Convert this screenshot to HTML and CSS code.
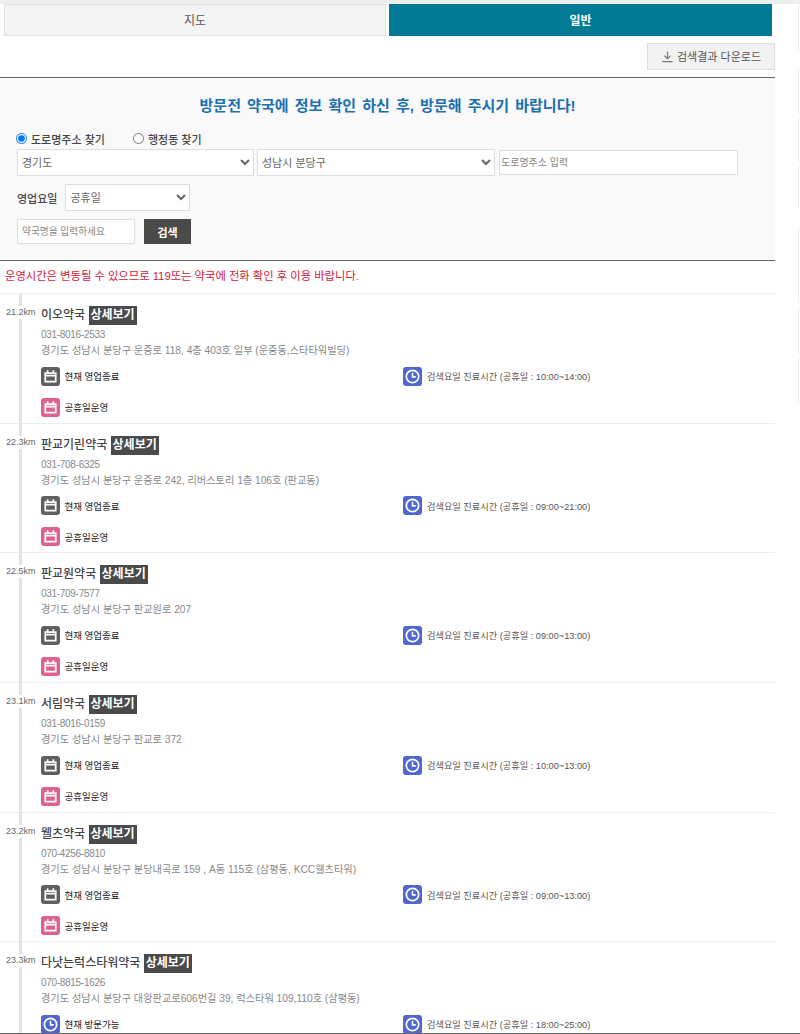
FILE: index.html
```html
<!DOCTYPE html>
<html lang="ko">
<head>
    <meta charset="UTF-8">
    <meta name="viewport" content="width=device-width, initial-scale=1.0">
    <title>약국 찾기</title>
    <link rel="stylesheet" href="styles.css">
</head>
<body>
    <svg class="icon-defs" width="0" height="0">
        <symbol id="ico-cal" viewBox="0 0 20 20">
            <path d="M4.500 6.500h11v9h-11zM4.500 9h11M7 3.500v3M13 3.500v3" fill="none" stroke="#fff" stroke-width="1.800"/>
        </symbol>
        <symbol id="ico-clock" viewBox="0 0 20 20">
            <circle cx="10" cy="10" r="6.500" fill="none" stroke="#fff" stroke-width="1.800"/>
            <path d="M10 6v4.400h3.400" fill="none" stroke="#fff" stroke-width="1.600"/>
        </symbol>
    </svg>

    <div class="page">
        <div class="main">
            <!-- Tabs -->
            <div class="tabs">
                <div class="tab">지도</div>
                <div class="tab tab-on">일반</div>
            </div>
            <div class="down-row">
                <button class="down-btn">
                    <svg class="down-ico" viewBox="0 0 14 14"><path d="M7 1.500v7.500M3.600 6l3.400 3.400L10.400 6M1.500 12.500h11" fill="none" stroke="#777" stroke-width="1.200"/></svg>
                    검색결과 다운로드
                </button>
            </div>

            <!-- Search box -->
            <div class="search">
                <h2 class="notice">방문전 약국에 정보 확인 하신 후, 방문해 주시기 바랍니다!</h2>
                <div class="radios">
                    <label class="radio"><input type="radio" name="addr" checked>도로명주소 찾기</label>
                    <label class="radio"><input type="radio" name="addr">행정동 찾기</label>
                </div>
                <div class="addr-row">
                    <select class="sel sel-city"><option>경기도</option></select>
                    <select class="sel sel-gu"><option>성남시 분당구</option></select>
                    <input class="txt txt-road" placeholder="도로명주소 입력">
                </div>
                <div class="day-row">
                    <span class="day-label">영업요일</span>
                    <select class="sel sel-day"><option>공휴일</option></select>
                </div>
                <div class="name-row">
                    <input class="txt txt-name" placeholder="약국명을 입력하세요">
                    <button class="search-btn">검색</button>
                </div>
            </div>

            <p class="warn">운영시간은 변동될 수 있으므로 119또는 약국에 전화 확인 후 이용 바랍니다.</p>

            <!-- Results -->
            <ul class="list">
                <li class="item">
                    <span class="dist">21.2km</span>
                    <div class="title">이오약국 <a class="more">상세보기</a></div>
                    <div class="info tel">031-8016-2533</div>
                    <div class="info">경기도 성남시 분당구 운중로 118, 4층 403호 일부 (운중동,스타타워빌딩)</div>
                    <div class="stats">
                        <div class="stat"><span class="badge gray"><svg><use href="#ico-cal"/></svg></span>현재 영업종료</div>
                        <div class="stat"><span class="badge blue"><svg><use href="#ico-clock"/></svg></span><span class="hours">검색요일 진료시간 (공휴일 : 10:00~14:00)</span></div>
                        <div class="stat"><span class="badge pink"><svg><use href="#ico-cal"/></svg></span>공휴일운영</div>
                    </div>
                </li>
                <li class="item">
                    <span class="dist">22.3km</span>
                    <div class="title">판교기린약국 <a class="more">상세보기</a></div>
                    <div class="info tel">031-708-6325</div>
                    <div class="info">경기도 성남시 분당구 운중로 242, 리버스토리 1층 106호 (판교동)</div>
                    <div class="stats">
                        <div class="stat"><span class="badge gray"><svg><use href="#ico-cal"/></svg></span>현재 영업종료</div>
                        <div class="stat"><span class="badge blue"><svg><use href="#ico-clock"/></svg></span><span class="hours">검색요일 진료시간 (공휴일 : 09:00~21:00)</span></div>
                        <div class="stat"><span class="badge pink"><svg><use href="#ico-cal"/></svg></span>공휴일운영</div>
                    </div>
                </li>
                <li class="item">
                    <span class="dist">22.5km</span>
                    <div class="title">판교원약국 <a class="more">상세보기</a></div>
                    <div class="info tel">031-709-7577</div>
                    <div class="info">경기도 성남시 분당구 판교원로 207</div>
                    <div class="stats">
                        <div class="stat"><span class="badge gray"><svg><use href="#ico-cal"/></svg></span>현재 영업종료</div>
                        <div class="stat"><span class="badge blue"><svg><use href="#ico-clock"/></svg></span><span class="hours">검색요일 진료시간 (공휴일 : 09:00~13:00)</span></div>
                        <div class="stat"><span class="badge pink"><svg><use href="#ico-cal"/></svg></span>공휴일운영</div>
                    </div>
                </li>
                <li class="item">
                    <span class="dist">23.1km</span>
                    <div class="title">서림약국 <a class="more">상세보기</a></div>
                    <div class="info tel">031-8016-0159</div>
                    <div class="info">경기도 성남시 분당구 판교로 372</div>
                    <div class="stats">
                        <div class="stat"><span class="badge gray"><svg><use href="#ico-cal"/></svg></span>현재 영업종료</div>
                        <div class="stat"><span class="badge blue"><svg><use href="#ico-clock"/></svg></span><span class="hours">검색요일 진료시간 (공휴일 : 10:00~13:00)</span></div>
                        <div class="stat"><span class="badge pink"><svg><use href="#ico-cal"/></svg></span>공휴일운영</div>
                    </div>
                </li>
                <li class="item">
                    <span class="dist">23.2km</span>
                    <div class="title">웰츠약국 <a class="more">상세보기</a></div>
                    <div class="info tel">070-4256-8810</div>
                    <div class="info">경기도 성남시 분당구 분당내곡로 159 , A동 115호 (삼평동, KCC웰츠타워)</div>
                    <div class="stats">
                        <div class="stat"><span class="badge gray"><svg><use href="#ico-cal"/></svg></span>현재 영업종료</div>
                        <div class="stat"><span class="badge blue"><svg><use href="#ico-clock"/></svg></span><span class="hours">검색요일 진료시간 (공휴일 : 09:00~13:00)</span></div>
                        <div class="stat"><span class="badge pink"><svg><use href="#ico-cal"/></svg></span>공휴일운영</div>
                    </div>
                </li>
                <li class="item">
                    <span class="dist">23.3km</span>
                    <div class="title">다낫는럭스타워약국 <a class="more">상세보기</a></div>
                    <div class="info tel">070-8815-1626</div>
                    <div class="info">경기도 성남시 분당구 대왕판교로606번길 39, 럭스타워 109,110호 (삼평동)</div>
                    <div class="stats">
                        <div class="stat"><span class="badge blue"><svg><use href="#ico-clock"/></svg></span>현재 방문가능</div>
                        <div class="stat"><span class="badge blue"><svg><use href="#ico-clock"/></svg></span><span class="hours">검색요일 진료시간 (공휴일 : 18:00~25:00)</span></div>
                    </div>
                </li>
            </ul>
        </div>

        <!-- Cut-off side banners -->
        <div class="side">
            <div class="side-box h45"></div>
            <div class="side-box h43 mt20"></div>
            <div class="side-box h44"></div>
            <div class="side-box h44"></div>
            <div class="side-box h75 mt20"></div>
            <div class="side-box h45"></div>
            <div class="side-box h45"></div>
        </div>
    </div>
</body>
</html>
```

FILE: styles.css
```css
html, body {
    margin: 0;
    height: 1034px;
    overflow: hidden;
    background: #fff;
}
body {
    font-family: "Liberation Sans", "Noto Sans CJK KR", sans-serif;
    font-size: 10px;
    color: #333;
    border-top: 4px solid #eee;
    border-bottom: 1px solid #666;
    box-sizing: border-box;
}
.icon-defs {
    position: absolute;
}
.page {
    display: flex;
}
.main {
    flex: none;
    width: 775px;
}

/* Side banners */
.side {
    flex: none;
    display: flex;
    flex-direction: column;
    gap: 4px;
    margin-left: 23px;
    padding-top: 1px;
    width: 10px;
}
.side-box {
    box-sizing: border-box;
    border: 1px solid #eee;
    border-radius: 2px;
}
.h43 { height: 43px; }
.h44 { height: 44px; }
.h45 { height: 45px; }
.h75 { height: 75px; }
.mt20 { margin-top: 16px; }

/* Tabs */
.tabs {
    display: flex;
    gap: 3px;
    padding-left: 4px;
    width: 768px;
}
.tab {
    flex: none;
    width: 382px;
    height: 32px;
    line-height: 32px;
    text-align: center;
    font-size: 12px;
    color: #555;
    background: #f4f4f4;
    border: 1px solid #e2e2e2;
    box-sizing: border-box;
}
.tab-on {
    width: 383px;
    background: #007a94;
    border-color: #007a94;
    color: #fff;
    font-weight: bold;
}
.down-row {
    display: flex;
    justify-content: flex-end;
    padding-top: 7px;
    height: 34px;
}
.down-btn {
    display: flex;
    align-items: center;
    justify-content: center;
    gap: 3px;
    width: 128px;
    height: 27px;
    padding: 0 0 1px;
    font: inherit;
    font-size: 11px;
    color: #555;
    background: #f2f2f2;
    border: 1px solid #ddd;
}
.down-ico {
    width: 13px;
    height: 13px;
}

/* Search box */
.search {
    height: 184px;
    padding: 0 17px;
    box-sizing: border-box;
    background: #f9f9f9;
    border-top: 1px solid #666;
    border-bottom: 1px solid #666;
}
.notice {
    margin: 0;
    padding-top: 18px;
    height: 35px;
    font-size: 15px;
    word-spacing: 2px;
    line-height: 20px;
    font-weight: bold;
    text-align: center;
    color: #1a6fb0;
}
.radios {
    display: flex;
    gap: 28px;
    height: 15px;
    margin-left: -1px;
    font-size: 11px;
    font-weight: 500;
    color: #444;
}
.radio {
    display: flex;
    align-items: center;
    gap: 4px;
}
.radio input {
    width: 11px;
    height: 11px;
    margin: 0;
}
.addr-row {
    display: flex;
    align-items: center;
    gap: 3px;
    margin-top: 3px;
}
.sel, .txt {
    height: 27px;
    box-sizing: border-box;
    font-family: inherit;
    font-size: 11px;
    color: #666;
    background: #fff;
    border: 1px solid #ddd;
    border-radius: 0;
    padding: 0;
}
.txt {
    font-size: 10px;
    padding: 0 1px;
}
.txt::placeholder {
    color: #888;
}
.sel-city { width: 237px; }
.sel-gu { width: 238px; }
.txt-road { width: 239px; height: 25px; margin-left: 1px; }
.day-row {
    display: flex;
    align-items: center;
    gap: 8px;
    margin-top: 8px;
}
.day-label {
    font-size: 11px;
    font-weight: 500;
    color: #444;
}
.sel-day { width: 125px; }
.name-row {
    display: flex;
    align-items: center;
    gap: 9px;
    margin-top: 8px;
}
.txt-name {
    width: 118px;
    height: 25px;
    padding-left: 4px;
    font-size: 9.700px;
}
.search-btn {
    width: 47px;
    height: 25px;
    padding: 0;
    font: inherit;
    font-weight: bold;
    font-size: 11px;
    color: #fff;
    background: #4a4a4a;
    border: 0;
}
.warn {
    margin: 0;
    height: 33px;
    padding-left: 5px;
    font-size: 11.300px;
    line-height: 31px;
    color: #cf1b3a;
    border-bottom: 1px solid #eee;
    box-sizing: border-box;
}

/* Results */
.list {
    margin: 0;
    padding: 0;
    list-style: none;
}
.item {
    position: relative;
    height: 129.700px;
    padding: 12px 0 0 41px;
    box-sizing: border-box;
    border-bottom: 1px solid #eee;
}
.item::before {
    content: "";
    position: absolute;
    left: 19px;
    top: 0;
    bottom: -1px;
    width: 3px;
    background: #e2e2e2;
}
.dist {
    position: absolute;
    left: 0;
    top: 12px;
    width: 40px;
    padding-left: 6px;
    box-sizing: border-box;
    background: #fff;
    font-size: 9px;
    line-height: 13px;
    color: #666;
}
.title {
    font-size: 12px;
    font-weight: 500;
    line-height: 19px;
    color: #444;
}
.more {
    display: inline-block;
    padding: 0 2px;
    font-weight: bold;
    color: #fff;
    background: #4a4a4a;
}
.info {
    font-size: 10.200px;
    line-height: 16px;
    color: #888;
}
.tel {
    font-size: 10px;
    letter-spacing: -0.300px;
    margin-top: 2px;
}
.stats {
    display: grid;
    grid-template-columns: 362.500px 1fr;
    row-gap: 11px;
    margin: 7px 0 0 -0.500px;
}
.stat {
    display: flex;
    align-items: center;
    gap: 5px;
    height: 20px;
    font-size: 9.500px;
    color: #222;
}
.hours {
    font-size: 9.200px;
    color: #555;
}
.badge {
    width: 19px;
    height: 19px;
    border-radius: 3px;
    display: flex;
    align-items: center;
    justify-content: center;
}
.badge svg {
    width: 19px;
    height: 19px;
}
.gray { background: #5f5f5f; }
.blue { background: #4f67cf; }
.pink { background: #e0608f; }
```
